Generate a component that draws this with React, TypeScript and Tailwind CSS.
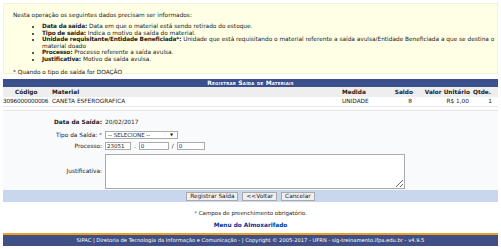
import { useState } from "react";

const bullets: { label: string; text: string }[] = [
  { label: "Data da saída:", text: "Data em que o material está sendo retirado do estoque." },
  { label: "Tipo de saída:", text: "Indica o motivo da saída do material." },
  {
    label: "Unidade requisitante/Entidade Beneficiada*:",
    text: "Unidade que está requisitando o material referente a saída avulsa/Entidade Beneficiada a que se destina o material doado",
  },
  { label: "Processo:", text: "Processo referente a saída avulsa." },
  { label: "Justificativa:", text: "Motivo da saída avulsa." },
];

const cols = "grid grid-cols-[49px_290px_46px_25px_57px_22px] items-center";

const App = () => {
  const [justificativa, setJustificativa] = useState("");

  return (
    <div className="w-[501px] h-[249px] bg-white px-[3px] pt-[3px] text-[5.8px] leading-[6.5px] text-[#222] font-['DejaVu_Sans',sans-serif]">
      {/* instruções */}
      <div className="h-[71px] bg-[#ffffe6] border border-[#f3f3d8] pl-[9px] pr-[1px] pt-[8px]">
        <p>Nesta operação os seguintes dados precisam ser informados:</p>
        <ul className="list-disc pl-[29px] mt-[4.5px]">
          {bullets.map((b) => (
            <li key={b.label}>
              <b className="tracking-[-0.15px]">{b.label}</b> {b.text}
            </li>
          ))}
        </ul>
        <p className="mt-[6.5px]">* Quando o tipo de saída for DOAÇÃO</p>
      </div>

      {/* tabela */}
      <div className="mt-[5px] h-[8px] bg-[#3b4f8c] text-white font-bold text-center text-[6px] leading-[8px] [font-variant:small-caps] tracking-[0.2px]">
        Registrar Saída de Materiais
      </div>
      <div className={`${cols} h-[10px] bg-[#eeeeee] font-bold`}>
        <span className="pl-[12px]">Código</span>
        <span>Material</span>
        <span>Medida</span>
        <span className="text-right">Saldo</span>
        <span className="text-right">Valor Unitário</span>
        <span className="text-right pr-[1px]">Qtde.</span>
      </div>
      <div className={`${cols} h-[10px] border-b border-[#e8e8e8]`}>
        <span className="tracking-[-0.2px]">3096000000006</span>
        <span>CANETA ESFEROGRAFICA</span>
        <span>UNIDADE</span>
        <span className="text-right pr-[1px]">8</span>
        <span className="text-right pr-[1px]">R$ 1,00</span>
        <span className="text-right">1</span>
      </div>

      {/* formulário */}
      <div className="mt-[3px] bg-[#f9fafc] border-t border-[#e6e6e6]">
        <div className="grid grid-cols-[99px_1fr] gap-x-[3px] items-center pt-[7px] pb-[1px]">
          <span className="text-right font-bold h-[8px] leading-[8px]">Data da Saída:</span>
          <span className="h-[8px] leading-[8px]">20/02/2017</span>

          <span className="text-right mt-[5px]">
            Tipo da Saída: <span className="text-[#3355cc]">*</span>
          </span>
          <div className="mt-[5px] relative w-[73px] h-[8px] bg-white border border-[#aaa] text-[5.5px] leading-[6px] pl-[2px]">
            -- SELECIONE --
            <span className="absolute right-[4px] top-0 text-[4px] leading-[6px]">▼</span>
          </div>

          <span className="text-right mt-[3px]">Processo:</span>
          <div className="mt-[3px] flex items-center gap-[2px]">
            <input defaultValue="23051" className="w-[26px] h-[8px] bg-white border border-[#aaa] px-[1px] text-[5.5px] leading-[6px]" />
            <span className="mx-[1px]">.</span>
            <input defaultValue="0" className="w-[30px] h-[8px] bg-white border border-[#aaa] px-[1px] text-[5.5px] leading-[6px]" />
            <span className="mx-[1px]">/</span>
            <input defaultValue="0" className="w-[28px] h-[8px] bg-white border border-[#aaa] px-[1px] text-[5.5px] leading-[6px]" />
          </div>

          <span className="text-right mt-[4px]">Justificativa:</span>
          <textarea
            value={justificativa}
            onChange={(e) => setJustificativa(e.target.value)}
            className="mt-[4px] block w-[300px] h-[35px] bg-white border border-[#aaa] resize-y"
          />
        </div>
        <div className="h-[12px] bg-[#c8d6ee] flex items-center justify-center gap-[4px]">
          {["Registrar Saída", "<<Voltar", "Cancelar"].map((l) => (
            <button
              key={l}
              type="button"
              className="h-[9px] px-[3px] bg-[#efefef] border border-[#aaa] text-[5.8px] leading-[6px]"
            >
              {l}
            </button>
          ))}
        </div>
      </div>

      <p className="mt-[8px] text-center text-[5.5px]">
        <span className="text-[#3355cc]">*</span> Campos de preenchimento obrigatório.
      </p>
      <p className="mt-[5px] text-center font-bold text-[#003399]">Menu do Almoxarifado</p>

      <div className="mt-[5px] h-[13px] bg-[#404f85] border-t-2 border-[#f0a020] text-white text-center text-[5.2px] leading-[11px]">
        SIPAC | Diretoria de Tecnologia da Informação e Comunicação - | Copyright © 2005-2017 - UFRN - sig-treinamento.ifpa.edu.br - v4.9.5
      </div>
    </div>
  );
};

export default App;
